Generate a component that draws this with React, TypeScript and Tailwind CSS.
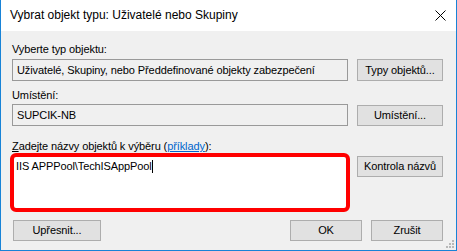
import React from "react";

const Btn = ({ children, className = "" }: { children: React.ReactNode; className?: string }) => (
  <div
    className={
      "flex items-center justify-center bg-[#e1e1e1] border border-[#adadad] text-[11px] leading-[13px] text-black " +
      className
    }
  >
    {children}
  </div>
);

export default function App() {
  return (
    <div
      className="relative w-[457px] h-[251px] flex flex-col border-x border-b border-[#1883d7] bg-[#f0f0f0] overflow-hidden"
      style={{ fontFamily: '"Liberation Sans", Arial, sans-serif' }}
    >
      {/* Title bar */}
      <div className="h-[31px] shrink-0 bg-white flex items-center justify-between pl-[9px] pr-[10px]">
        <span className="text-[12px] text-black leading-[16px] pb-[1px]">
          Vybrat objekt typu: Uživatelé nebo Skupiny
        </span>
        <svg width="11" height="11" viewBox="0 0 11 11">
          <path d="M0.5 0.5 L10.5 10.5 M10.5 0.5 L0.5 10.5" stroke="#000" strokeWidth="1" fill="none" />
        </svg>
      </div>

      {/* Body */}
      <div className="flex-1 flex flex-col pl-[11px] pr-[13px] text-[11px] leading-[13px] text-black tracking-[-0.1px]">
        <div className="mt-[12px] h-[13px]">Vyberte typ objektu:</div>
        <div className="mt-[3px] flex gap-[9px]">
          <div className="w-[336px] h-[22px] border border-[#999999] bg-[#f0f0f0] flex items-center pl-[4px]">
            Uživatelé, Skupiny, nebo Předdefinované objekty zabezpečení
          </div>
          <Btn className="w-[86px] h-[22px]">Typy objektů...</Btn>
        </div>

        <div className="mt-[8px] h-[13px]">Umístění:</div>
        <div className="mt-[2px] flex gap-[9px]">
          <div className="w-[336px] h-[22px] border border-[#999999] bg-[#f0f0f0] flex items-center pl-[4px]">
            SUPCIK-NB
          </div>
          <Btn className="w-[86px] h-[21px] mt-[1px]">Umístění...</Btn>
        </div>

        <div className="mt-[14px] h-[13px]">
          <span className="underline">Z</span>adejte názvy objektů k výběru (
          <span className="text-[#0066cc] underline">příklady</span>):
        </div>
        <div className="flex">
          <div className="ml-[-2px] w-[340px] h-[59px] border-[4px] border-[#ff0000] rounded-[6px] bg-white pl-[2px] pt-[2px]">
            <div className="flex items-center h-[14px]">
              <span>IIS APPPool\TechISAppPool</span>
              <span className="inline-block w-[1px] h-[13px] bg-black"></span>
            </div>
          </div>
          <Btn className="ml-[7px] mt-[3px] w-[86px] h-[21px]">Kontrola názvů</Btn>
        </div>

        <div className="mt-[8px] flex items-center">
          <Btn className="ml-[1px] w-[88px] h-[21px]">Upřesnit...</Btn>
          <div className="flex-1" />
          <Btn className="w-[72px] h-[21px]">OK</Btn>
          <Btn className="ml-[9px] w-[72px] h-[21px]">Zrušit</Btn>
        </div>
      </div>

      {/* Resize grip */}
      <svg className="absolute right-[2px] bottom-[2px]" width="8" height="8" viewBox="0 0 8 8">
        <rect x="6" y="0" width="2" height="2" fill="#b8b8b8" />
        <rect x="3" y="3" width="2" height="2" fill="#b8b8b8" />
        <rect x="6" y="3" width="2" height="2" fill="#b8b8b8" />
        <rect x="0" y="6" width="2" height="2" fill="#b8b8b8" />
        <rect x="3" y="6" width="2" height="2" fill="#b8b8b8" />
        <rect x="6" y="6" width="2" height="2" fill="#b8b8b8" />
      </svg>
    </div>
  );
}
